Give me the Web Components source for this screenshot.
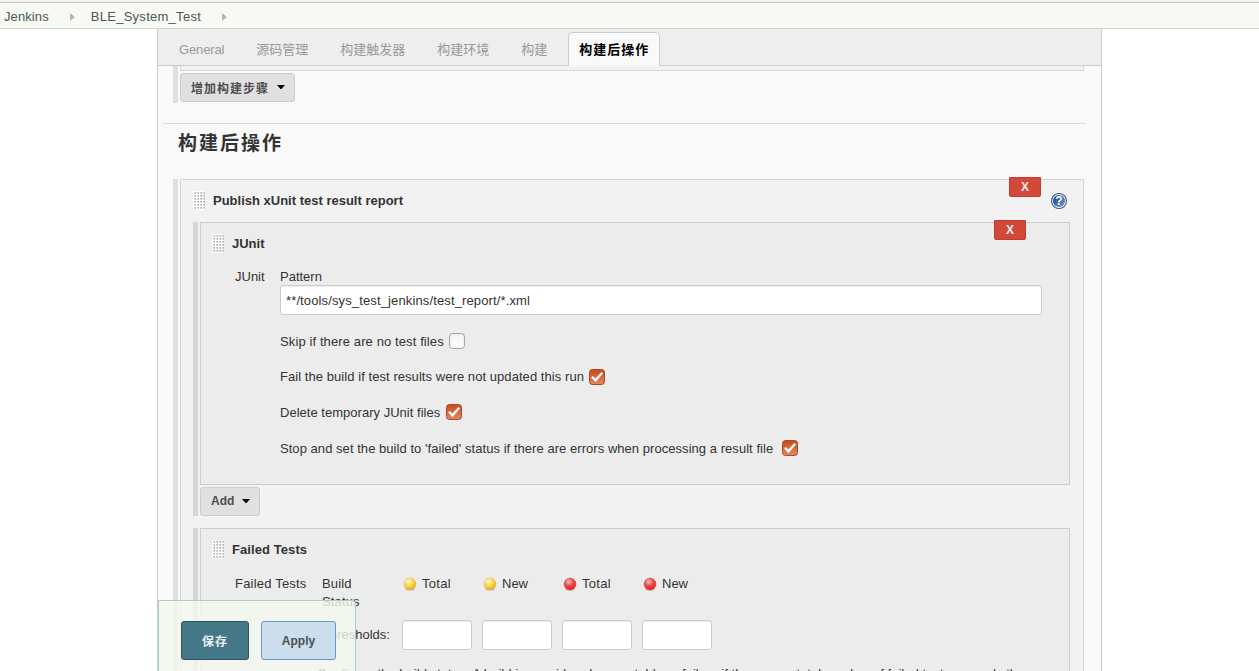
<!DOCTYPE html>
<html lang="zh-CN">
<head>
<meta charset="utf-8">
<title>BLE_System_Test Config [Jenkins]</title>
<style>
html,body{margin:0;height:100%;overflow:hidden;background:#fff}
body{font:13px/18px "Liberation Sans","Noto Sans CJK SC",sans-serif;color:#333}
</style>
</head>
<body>
<jenkins-page></jenkins-page>
<script>
const define = (name, html) => customElements.define(name, class extends HTMLElement {
  constructor() {
    super();
    const t = document.createElement('template');
    t.innerHTML = '<style>*{box-sizing:border-box}</style>' + html;
    this.attachShadow({mode: 'open'}).append(t.content.cloneNode(true));
  }
});

define('crumb-item', `<style>
:host{display:flex;align-items:center;color:#4d545d;letter-spacing:var(--ls,0)}
svg{width:5px;height:8px;margin:0 16px 0 21px}
</style><slot></slot><svg viewBox="0 0 5 8"><path d="M0 0L5 4L0 8Z" fill="#b3b5b0"/></svg>`);

define('crumb-bar', `<style>
:host{display:flex;height:29px;border-top:2px solid #f3f2f0;border-bottom:1px solid #d3d4cc;background:#f6faf2}
div{display:flex;flex:1;border-top:1px solid #c8c7c1;padding-left:4px;align-items:center;padding-top:2px}
</style><div><slot></slot></div>`);

define('config-tab', `<style>
:host{display:block;padding:9px 16px 0;color:#999;height:34px;line-height:18px;white-space:nowrap;letter-spacing:var(--ls,0)}
:host([active]){margin-left:5px;padding:8px 10px 0;border:1px solid #ccc;border-bottom:0;border-radius:5px 5px 0 0;background:#f9f9f9;color:#000;font-weight:700;letter-spacing:1px;width:92px}
</style><slot></slot>`);

define('config-tabs', `<style>
:host{display:flex;height:37px;background:#eee;border-bottom:1px solid #ccc;padding:3px 0 0 5px;position:relative;z-index:2}
</style><slot></slot>`);

define('menu-button', `<style>
:host{display:block;width:max-content}
button{display:flex;align-items:center;height:29px;padding:0 9px 1px 10px;border:1px solid #ccc;border-radius:3px;background:#e0e0e0;color:#4d4d4d;font:bold 12px "Liberation Sans","Noto Sans CJK SC",sans-serif;letter-spacing:var(--ls,0)}
svg{width:8px;height:4px;margin:0 0 0 8px}
</style><button><slot></slot><svg viewBox="0 0 8 4"><path d="M0 0H8L4.5 4H3.5Z" fill="#000"/></svg></button>`);

define('drag-grip', `<style>:host{display:block;width:12px;height:19px}svg{display:block}</style>
<svg width="12" height="19" shape-rendering="crispEdges"><defs><pattern id="p" width="3" height="3" patternUnits="userSpaceOnUse"><rect width="3" height="3" fill="#fff"/><rect x="1" y="1" width="1" height="1" fill="#cdcdcd"/><rect x="2" y="1" width="1" height="1" fill="#b4b4b4"/><rect x="2" y="2" width="1" height="1" fill="#bcbcbc"/><rect x="1" y="2" width="1" height="1" fill="#e6e6e6"/></pattern></defs><rect width="12" height="19" fill="url(#p)"/></svg>`);

define('delete-button', `<style>
:host{display:block;width:32px;height:20px;position:absolute;top:-3px;right:var(--right)}
button{display:block;width:32px;height:20px;padding:0;border:1px solid #bf3e30;border-radius:0 0 2px 2px;background:#d24939;color:#f0eeee;font:bold 12px/18px "Liberation Sans",sans-serif}
</style><button><slot></slot></button>`);

define('help-icon', `<style>:host{display:block;width:16px;height:16px}svg{display:block}
text{font:bold 12px "Liberation Sans",sans-serif;fill:#fff}</style>
<svg width="16" height="16" viewBox="0 0 16 16"><defs><linearGradient id="g" x1="0" y1="0" x2="1" y2="1"><stop offset="0.2" stop-color="#264f8d"/><stop offset="1" stop-color="#7e9fcd"/></linearGradient></defs><circle cx="8" cy="8" r="8" fill="#2f5996"/><circle cx="8" cy="8" r="6.9" fill="#fff"/><circle cx="8" cy="8" r="6.1" fill="url(#g)"/><text x="8" y="12.3" text-anchor="middle">?</text></svg>`);

define('config-chunk', `<style>
:host{display:flex;gap:2px}
.bar{width:5px;background:var(--bar,#e0e0e0)}
.main{flex:1;min-width:0}
.box{position:relative;border:1px solid var(--line,#d6d6d6);background:var(--fill,#f2f2f2);height:var(--h,auto)}
header{display:flex;align-items:flex-start;gap:8px;font-weight:bold;padding:var(--hp,11px 16px 0 12px);height:42px}
header drag-grip{flex:none}
.t{flex:1;padding-top:1px}
::slotted(help-icon){margin-top:2px}
</style><div class="bar"></div><div class="main"><div class="box"><slot name="delete"></slot>
<header><drag-grip></drag-grip><span class="t"><slot name="title"></slot></span><slot name="help"></slot></header><slot></slot></div><slot name="after"></slot></div>`);

define('text-field', `<style>
:host{display:block}
.v{display:flex;align-items:center;height:30px;padding:1px 5px 0;border:1px solid #ccc;border-radius:3px;background:#fff;letter-spacing:var(--ls,0);box-shadow:inset 0 1px 1px rgba(0,0,0,.075)}
</style><div class="v"><slot></slot></div>`);

define('check-row', `<style>
:host{display:flex;height:18px;align-items:center;letter-spacing:var(--ls,0);white-space:nowrap}
svg{margin-left:var(--gap,5px);flex:none;position:relative;top:var(--dy,0)}
.on{display:none}:host([checked]) .on{display:inline}:host([checked]) .off{display:none}
</style><slot></slot><svg width="16" height="16" viewBox="0 0 16 16"><defs><linearGradient id="o" x2="0" y2="1"><stop offset="0" stop-color="#c94b1d"/><stop offset=".3" stop-color="#d35a2a"/><stop offset="1" stop-color="#e58a66"/></linearGradient><linearGradient id="w" x2="0" y2="1"><stop offset="0" stop-color="#f1f1f1"/><stop offset="1" stop-color="#fff"/></linearGradient></defs>
<g class="off"><rect x=".6" y=".6" width="14.8" height="14.8" rx="3" fill="url(#w)" stroke="#9d9d9d"/></g>
<g class="on"><rect x=".5" y=".5" width="15" height="15" rx="3" fill="url(#o)" stroke="#a54a2b"/><path d="M3 7.7L6.5 11.3L13.2 3.7" fill="none" stroke="#fff" stroke-width="2.3"/></g></svg>`);

define('status-ball', `<style>
:host{display:flex;width:80px;align-items:center;gap:5px;letter-spacing:var(--ls,0)}
.r{display:none}:host([red]) .r{display:inline}:host([red]) .y{display:none}
svg{position:relative;top:-.4px}
</style><svg width="14" height="14" viewBox="0 0 14 14"><defs><radialGradient id="y" cx=".4" cy=".3" r=".7"><stop offset="0" stop-color="#fffbd0"/><stop offset=".5" stop-color="#f8d850"/><stop offset="1" stop-color="#f5a21c"/></radialGradient><radialGradient id="r" cx=".4" cy=".3" r=".7"><stop offset="0" stop-color="#ffc4c4"/><stop offset=".5" stop-color="#f34b4b"/><stop offset="1" stop-color="#e81818"/></radialGradient></defs><ellipse cx="7" cy="12.4" rx="5" ry="1.3" fill="#ccc"/><circle class="y" cx="7" cy="7" r="6" fill="url(#y)" stroke="#d8b458" stroke-width=".5"/><circle class="r" cx="7" cy="7" r="6" fill="url(#r)" stroke="#b65050" stroke-width=".5"/></svg><slot></slot>`);

define('form-button', `<style>
:host{display:block}
button{display:block;width:var(--w);height:39px;padding:0;border:1px solid #6b96c8;border-radius:3px;background:#ccddee;color:#4d4d4d;font:bold 12px "Liberation Sans","Noto Sans CJK SC",sans-serif;letter-spacing:var(--ls,0)}
:host([primary]) button{background:#447788;border-color:#30505d;color:#edf1f3;padding-bottom:1px}
</style><button><slot></slot></button>`);

define('save-bar', `<style>
:host{display:flex;position:absolute;left:158px;top:600px;width:198px;height:80px;padding:20px 0 0 22px;gap:12px;background:rgba(245,249,239,.8);border:1px solid #abd0bb;border-radius:0 4px 0 0;z-index:3}
</style><form-button primary style="--w:68px;--ls:1px">保存</form-button><form-button style="--w:75px">Apply</form-button>`);

define('junit-form', `<style>
:host{display:flex;padding:3px 27px 0 34px}
.l{width:45px}.f{flex:1}
.p{height:17px}
check-row{margin-bottom:17.5px}text-field{margin-bottom:17.5px}
</style><div class="l">JUnit</div><div class="f"><div class="p">Pattern</div>
<text-field style="--ls:.13px">**/tools/sys_test_jenkins/test_report/*.xml</text-field>
<check-row style="--ls:.11px;--dy:-.5px">Skip if there are no test files</check-row>
<check-row checked style="--ls:.06px">Fail the build if test results were not updated this run</check-row>
<check-row checked style="--gap:5.5px;--ls:.02px;--dy:-.8px;margin-bottom:18px">Delete temporary JUnit files</check-row>
<check-row checked style="--gap:9px;--ls:.045px;--dy:-.5px">Stop and set the build to 'failed' status if there are errors when processing a result file</check-row></div>`);

define('threshold-form', `<style>
:host{display:grid;grid-template-columns:87px 80px 1fr;padding:4px 0 0 34px}
.s{display:flex;height:18px;padding-left:1px}
.f{display:flex;gap:10px;margin-top:5px}
text-field{width:70px}
.th{margin-top:5px;height:30px;padding-top:6px}
.two{width:50px;height:40px;letter-spacing:.15px}
.n{grid-column:1/4;margin:15px 0 0 82px;white-space:nowrap;letter-spacing:.045px}
</style><span style="letter-spacing:.2px">Failed Tests</span><span class="two">Build Status</span>
<div class="s"><status-ball style="--ls:.3px">Total</status-ball><status-ball>New</status-ball><status-ball red style="--ls:.3px">Total</status-ball><status-ball red>New</status-ball></div>
<span></span><span class="th">Thresholds:</span><div class="f"><text-field></text-field><text-field></text-field><text-field></text-field><text-field></text-field></div>
<div class="n">Configure the build status. A build is considered as unstable or failure if the new or total number of failed tests exceeds the</div>`);

define('jenkins-page', `<style>
:host{display:block;position:relative;height:671px;overflow:hidden}
main{display:block;margin-left:157px;width:945px;height:642px;border:solid #ccc;border-width:0 1px;background:#f9f9f9;overflow:hidden}
.prev{display:flex;gap:2px;margin-left:15px;width:911px;height:37px}
.prev i{width:5px;background:#e0e0e0}
.prev div{flex:1}
.prev b{display:block;height:5px;border:solid #d6d6d6;border-width:0 1px 1px;background:#f2f2f2;margin-bottom:2px}
hr{margin:20px 15px 0 5px;border:0;border-top:1px solid #d9d9d9}
h2{margin:5px 0 0 20px;height:50px;font:bold 19px/30px "Liberation Sans","Noto Sans CJK SC",sans-serif;letter-spacing:2px}
.outer{margin-left:15px;width:911px;height:600px}
.inner{margin:0 13px 12px 12px;--bar:#d6d6d6;--line:#cdcdcd;--fill:#ececec;--hp:11px 16px 0 11px}
</style>
<crumb-bar><crumb-item style="--ls:.1px">Jenkins</crumb-item><crumb-item style="--ls:.27px">BLE_System_Test</crumb-item></crumb-bar>
<main><config-tabs><config-tab style="--ls:-.14px">General</config-tab><config-tab>源码管理</config-tab><config-tab>构建触发器</config-tab><config-tab>构建环境</config-tab><config-tab>构建</config-tab><config-tab active>构建后操作</config-tab></config-tabs>
<div class="prev"><i></i><div><b></b><menu-button style="--ls:1px">增加构建步骤</menu-button></div></div>
<hr><h2>构建后操作</h2>
<config-chunk class="outer" style="--h:600px"><delete-button slot="delete" style="--right:42px">X</delete-button><span slot="title">Publish xUnit test result report</span><help-icon slot="help"></help-icon>
<config-chunk class="inner" style="--h:263px"><delete-button slot="delete" style="--right:43px">X</delete-button><span slot="title">JUnit</span><junit-form></junit-form><menu-button slot="after" style="margin-top:2px">Add</menu-button></config-chunk>
<config-chunk class="inner" style="--h:300px"><span slot="title" style="letter-spacing:.08px">Failed Tests</span><threshold-form></threshold-form></config-chunk>
</config-chunk></main><save-bar></save-bar>`);
</script>
</body>
</html>
